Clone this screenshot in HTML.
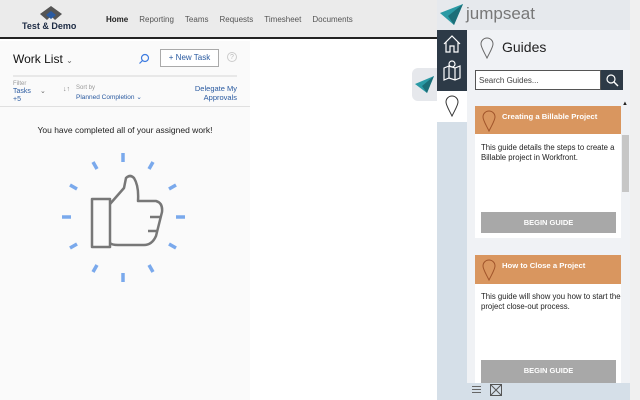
<!DOCTYPE html><html><head><style>
*{margin:0;padding:0;box-sizing:border-box}
body{width:640px;height:400px;overflow:hidden;background:#fff;font-family:"Liberation Sans",sans-serif;position:relative}
.a{position:absolute}
</style></head><body>
<div class="a" style="left:0;top:0;width:437px;height:39px;background:#ebebeb;border-bottom:2px solid #222"></div>
<svg class="a" style="left:38px;top:5px" width="26" height="17" viewBox="0 0 26 17"><path d="M13 1 L24 9 L17 15 L13 11 L9 15 L2 9 Z" fill="#555"/><path d="M13 6 L18 10 L13 14 L8 10Z" fill="#2a5aa0"/></svg>
<div class="a" style="left:22px;top:21px;font-size:9px;font-weight:bold;color:#1d2b44">Test &amp; Demo</div>
<div class="a" style="left:106px;top:15px;font-size:8px;color:#555;word-spacing:0"><b style="color:#222">Home</b><span style="margin-left:11px">Reporting</span><span style="margin-left:11px">Teams</span><span style="margin-left:11px">Requests</span><span style="margin-left:11px">Timesheet</span><span style="margin-left:11px">Documents</span></div>
<div class="a" style="left:0;top:41px;width:250px;height:359px;background:#fafafa"></div>
<div class="a" style="left:13px;top:52px;font-size:12px;color:#111">Work List <span style="font-size:8px;color:#666">⌄</span></div>
<svg class="a" style="left:138px;top:53px" width="12" height="12"><circle cx="7" cy="5" r="3.5" fill="none" stroke="#3d7be0" stroke-width="1.2"/><path d="M4.5 7.5L1.5 10.5" stroke="#3d7be0" stroke-width="1.2"/></svg>
<div class="a" style="left:160px;top:49px;width:59px;height:18px;border:1px solid #aaa;background:#fff;font-size:8px;color:#2a5aa0;text-align:center;line-height:16px">+ New Task</div>
<div class="a" style="left:227px;top:52px;width:10px;height:10px;border:1px solid #ccc;border-radius:50%;font-size:7px;color:#bbb;text-align:center;line-height:9px">?</div>
<div class="a" style="left:13px;top:75px;width:224px;height:2px;background:#e8e8e8"></div>
<div class="a" style="left:13px;top:81px;font-size:6px;color:#999">Filter</div>
<div class="a" style="left:13px;top:88px;font-size:7px;color:#2a5aa0;line-height:8px">Tasks<br>+5</div>
<div class="a" style="left:40px;top:87px;font-size:7px;color:#666">⌄</div>
<div class="a" style="left:63px;top:86px;font-size:7px;color:#888">↓↑</div>
<div class="a" style="left:76px;top:85px;font-size:6px;color:#999">Sort by</div>
<div class="a" style="left:76px;top:93px;font-size:6.5px;color:#2a5aa0">Planned Completion ⌄</div>
<div class="a" style="left:180px;top:84px;width:57px;font-size:7.5px;color:#2a5aa0;text-align:right;line-height:9px">Delegate My Approvals</div>
<div class="a" style="left:0;top:106px;width:250px;height:1px;background:#e0e0e0"></div>
<div class="a" style="left:0;top:125px;width:250px;font-size:8.5px;color:#222;text-align:center">You have completed all of your assigned work!</div>
<svg class="a" style="left:50px;top:140px" width="150" height="150" viewBox="0 0 150 150">
<g stroke="#7aa9ec" stroke-width="3.5">
<path d="M73 13v9M73 133v9M12 77h9M126 77h9"/>
<path d="M43 22l4 7M103 22l-4 7M43 132l4-7M103 132l-4-7"/>
<path d="M20 45l7 4M126 45l-7 4M20 108l7-4M126 108l-7-4"/>
</g>
<g fill="none" stroke="#777" stroke-width="2.5" stroke-linejoin="round">
<rect x="42" y="59" width="18" height="48"/>
<path d="M60 64 L74 48 L76 38 Q80 34 84 38 Q89 46 88 61 L106 61 Q113 63 112 72 L106 96 Q102 105 94 105 L68 105 Q62 105 60 103"/>
<path d="M100 77h11M98 91h10"/>
</g></svg>
<div class="a" style="left:412px;top:68px;width:25px;height:33px;background:#e6e8ec;border-radius:6px 0 0 6px"></div>
<svg class="a" style="left:415px;top:76px" width="19" height="17" viewBox="0 0 19 17"><path d="M0 8L19 0L12 17Z" fill="#2a9aa5"/><path d="M7 10L19 0L12 17Z" fill="#1b6e78"/></svg>
<div class="a" style="left:437px;top:0;width:193px;height:400px;background:#d5dfe8"></div>
<div class="a" style="left:437px;top:0;width:193px;height:30px;background:#e6e9ed"></div>
<svg class="a" style="left:440px;top:4px" width="23" height="21" viewBox="0 0 23 21"><path d="M0 9L23 0L14 21Z" fill="#2a9aa5"/><path d="M8 12L23 0L14 21Z" fill="#1b6e78"/></svg>
<div class="a" style="left:466px;top:4px;font-size:17px;color:#777">jumpseat</div>
<div class="a" style="left:630px;top:0;width:10px;height:400px;background:#f0f0f0"></div>
<div class="a" style="left:437px;top:30px;width:30px;height:61px;background:#2d3a47"></div>
<svg class="a" style="left:442px;top:34px" width="20" height="52" viewBox="0 0 20 52" fill="none" stroke="#fff" stroke-width="1.2"><path d="M2 10L10 2L18 10M4 8v10h4v-6h4v6h4V8"/><path d="M2 34l5-2 6 2 5-2v12l-5 2-6-2-5 2Z M7 32v12M13 34v12"/><circle cx="10" cy="30" r="3"/></svg>
<div class="a" style="left:437px;top:91px;width:30px;height:31px;background:#fff"></div>
<svg class="a" style="left:445px;top:95px" width="14" height="22" viewBox="0 0 14 22"><path d="M7 21C3 13 1 10 1 7a6 6 0 0 1 12 0c0 3-2 6-6 14Z" fill="none" stroke="#333" stroke-width="1"/></svg>
<div class="a" style="left:467px;top:30px;width:163px;height:353px;background:#f0f2f5"></div>
<svg class="a" style="left:480px;top:37px" width="14" height="22" viewBox="0 0 14 22"><path d="M7 21C3 13 1 10 1 7a6 6 0 0 1 12 0c0 3-2 6-6 14Z" fill="none" stroke="#666" stroke-width="1"/></svg>
<div class="a" style="left:502px;top:39px;font-size:14px;color:#222">Guides</div>
<div class="a" style="left:475px;top:70px;width:126px;height:20px;background:#fff;border:1px solid #555;font-size:8px;color:#444;padding:5px 3px">Search Guides...</div>
<div class="a" style="left:601px;top:70px;width:22px;height:20px;background:#2d3a47"></div>
<svg class="a" style="left:605px;top:73px" width="14" height="14"><circle cx="6" cy="6" r="4" fill="none" stroke="#fff" stroke-width="1.2"/><path d="M9 9l4 4" stroke="#fff" stroke-width="1.4"/></svg>
<div class="a" style="left:622px;top:101px;font-size:6px;color:#222">▲</div>
<div class="a" style="left:622px;top:135px;width:7px;height:57px;background:#c6c6c6"></div>
<div class="a" style="left:622px;top:391px;font-size:6px;color:#222">▼</div>
<div class="a" style="left:475px;top:106px;width:146px;height:132px;background:#fff"></div>
<div class="a" style="left:475px;top:106px;width:146px;height:28px;background:#d9965f"></div>
<svg class="a" style="left:482px;top:110px" width="14" height="22" viewBox="0 0 14 22"><path d="M7 21C3 13 1 10 1 7a6 6 0 0 1 12 0c0 3-2 6-6 14Z" fill="none" stroke="#a0542a" stroke-width="1"/></svg>
<div class="a" style="left:502px;top:112px;font-size:7.7px;font-weight:bold;color:#fff">Creating a Billable Project</div>
<div class="a" style="left:481px;top:143px;width:140px;font-size:7.8px;color:#222;line-height:10px">This guide details the steps to create a Billable project in Workfront.</div>
<div class="a" style="left:481px;top:212px;width:135px;height:21px;background:#a8a8a8;color:#fff;font-size:7.5px;font-weight:bold;text-align:center;line-height:21px">BEGIN GUIDE</div>
<div class="a" style="left:475px;top:255px;width:146px;height:128px;background:#fff"></div>
<div class="a" style="left:475px;top:255px;width:146px;height:29px;background:#d9965f"></div>
<svg class="a" style="left:482px;top:259px" width="14" height="22" viewBox="0 0 14 22"><path d="M7 21C3 13 1 10 1 7a6 6 0 0 1 12 0c0 3-2 6-6 14Z" fill="none" stroke="#a0542a" stroke-width="1"/></svg>
<div class="a" style="left:502px;top:261px;font-size:7.7px;font-weight:bold;color:#fff">How to Close a Project</div>
<div class="a" style="left:481px;top:292px;width:140px;font-size:7.8px;color:#222;line-height:10px">This guide will show you how to start the project close-out process.</div>
<div class="a" style="left:481px;top:360px;width:135px;height:23px;background:#a8a8a8;color:#fff;font-size:7.5px;font-weight:bold;text-align:center;line-height:21px">BEGIN GUIDE</div>
<div class="a" style="left:467px;top:383px;width:163px;height:17px;background:#d5dfe8"></div>
<div class="a" style="left:472px;top:386px;width:9px;height:7px;border-top:1px solid #666;border-bottom:1px solid #666"></div>
<div class="a" style="left:472px;top:389px;width:9px;height:1px;background:#666"></div>
<svg class="a" style="left:490px;top:384px" width="12" height="12"><rect x=".5" y=".5" width="11" height="11" fill="none" stroke="#555"/><path d="M1 1l10 10M11 1L1 11" stroke="#555"/></svg>
</body></html>
